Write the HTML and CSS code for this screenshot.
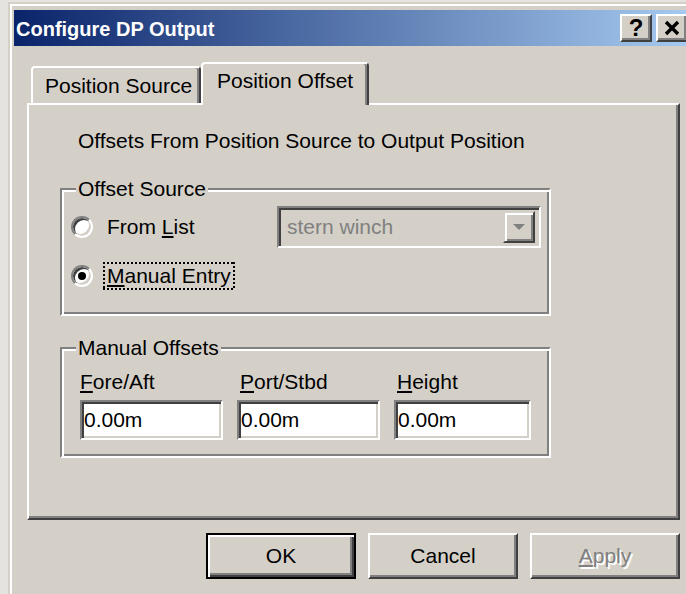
FILE: index.html
```html
<!DOCTYPE html>
<html lang="en">
<head>
<meta charset="utf-8">
<title>Configure DP Output</title>
<link rel="stylesheet" href="styles.css">
</head>
<body>
<div class="window">
  <div class="caption">
    <span class="title">Configure DP Output</span>
    <div class="caption-buttons">
      <span class="cbtn help">?</span>
      <span class="cbtn close">
        <svg width="16" height="16" viewBox="0 0 16 16"><path d="M2 2 L14 14 M14 2 L2 14" stroke="#000" stroke-width="3.4" fill="none"/></svg>
      </span>
    </div>
  </div>

  <div class="client">
    <div class="tabs">
      <div class="tab">Position Source</div>
      <div class="tab active">Position Offset</div>
    </div>

    <div class="panel">
      <p class="intro">Offsets From Position Source to Output Position</p>

      <fieldset class="group source">
        <legend>Offset Source</legend>
        <div class="row">
          <span class="radio"></span>
          <span class="label">From <u>L</u>ist</span>
          <div class="combo">
            <span class="combo-text">stern winch</span>
            <span class="combo-btn">
              <svg width="14" height="8" viewBox="0 0 14 8"><path d="M1 1 H13 L7 7 Z" fill="#808080"/></svg>
            </span>
          </div>
        </div>
        <div class="row">
          <span class="radio checked"></span>
          <span class="label focus"><u>M</u>anual Entry</span>
        </div>
      </fieldset>

      <fieldset class="group offsets">
        <legend>Manual Offsets</legend>
        <div class="fields">
          <div class="field">
            <span class="flabel"><u>F</u>ore/Aft</span>
            <span class="edit">0.00m</span>
          </div>
          <div class="field">
            <span class="flabel"><u>P</u>ort/Stbd</span>
            <span class="edit">0.00m</span>
          </div>
          <div class="field">
            <span class="flabel"><u>H</u>eight</span>
            <span class="edit">0.00m</span>
          </div>
        </div>
      </fieldset>
    </div>

    <div class="buttons">
      <span class="btn default">OK</span>
      <span class="btn">Cancel</span>
      <span class="btn disabled"><u>A</u>pply</span>
    </div>
  </div>
</div>
</body>
</html>
```

FILE: styles.css
```css
html, body {
  margin: 0;
  height: 100%;
  overflow: hidden;
  background: #e4e3e0;
}

body {
  font-family: "Liberation Sans", Arial, sans-serif;
  font-size: 21px;
  line-height: 24px;
  color: #000;
}

u {
  text-decoration-thickness: 2px;
  text-underline-offset: 2px;
}

/* Window frame */
.window {
  margin: 2px 0 0 8px;
  width: 676px;
  height: 600px;
  padding: 6px 4px 4px 4px;
  background: #d4d0c8;
  border: 2px solid #d4d0c8;
  box-shadow: inset 2px 2px 0 #fff;
}

/* Title bar */
.caption {
  height: 36px;
  display: flex;
  align-items: center;
  justify-content: space-between;
  padding: 0 2px;
  background: linear-gradient(90deg, #0a246a 0%, #a6caf0 100%);
}

.title {
  color: #fff;
  font-weight: bold;
  font-size: 20px;
  padding-top: 2px;
}

.caption-buttons {
  display: flex;
  gap: 4px;
}

.cbtn {
  width: 32px;
  height: 28px;
  box-sizing: border-box;
  display: flex;
  align-items: center;
  justify-content: center;
  background: #d4d0c8;
  border: 2px solid;
  border-color: #fff #404040 #404040 #fff;
  box-shadow: inset -2px -2px 0 #808080;
}

.cbtn.help {
  font-weight: bold;
  font-size: 24px;
  line-height: 24px;
}

/* Client area */
.client {
  padding: 16px 0 0 13px;
}

.tabs {
  display: flex;
  align-items: flex-end;
  height: 43px;
  margin: 0 0 -2px 4px;
  position: relative;
}

.tab {
  width: 170px;
  height: 37px;
  box-sizing: border-box;
  margin-bottom: 2px;
  padding: 6px 0 0 12px;
  border-top: 2px solid #fff;
  border-left: 2px solid #fff;
  border-right: 2px solid #404040;
  border-radius: 4px 4px 0 0;
  box-shadow: inset -2px 0 0 #808080;
  background: #d4d0c8;
}

.tab.active {
  width: 168px;
  height: 43px;
  margin-bottom: 0;
  padding: 5px 0 0 14px;
}

.panel {
  width: 653px;
  height: 417px;
  box-sizing: border-box;
  padding: 24px 0 0 31px;
  border: 2px solid;
  border-color: #fff #404040 #404040 #fff;
  box-shadow: inset -2px -2px 0 #808080;
}

.intro {
  margin: 0 0 0 18px;
}

/* Etched group boxes */
.group {
  width: 491px;
  box-sizing: border-box;
  margin: 24px 0 0 0;
  min-width: 0;
  border: 2px solid #808080;
  border-right-color: #fff;
  border-bottom-color: #fff;
  box-shadow: inset 2px 2px 0 #fff, inset -2px -2px 0 #808080;
}

.group legend {
  margin-left: 5px;
  padding: 0 2px;
  background: #d4d0c8;
}

.source {
  padding: 5px 8px 17px 9px;
}

.row {
  display: flex;
  align-items: center;
  height: 42px;
}

.row + .row {
  margin-top: 7px;
}

.radio {
  position: relative;
  width: 22px;
  height: 22px;
  box-sizing: border-box;
  border-radius: 50%;
  border: 2px solid;
  border-color: #808080 #fff #fff #808080;
  background: #fff;
  box-shadow: inset 2px 2px 0 #404040, inset -2px -2px 0 #d4d0c8;
  margin-right: 10px;
}

.radio.checked::after {
  content: "";
  position: absolute;
  left: 5px;
  top: 5px;
  width: 8px;
  height: 8px;
  border-radius: 50%;
  background: #000;
}

.label {
  padding: 2px 4px;
  line-height: 24px;
}

.label.focus {
  background:
    repeating-linear-gradient(90deg, #000 0 2px, transparent 2px 4px) top left / 100% 2px no-repeat,
    repeating-linear-gradient(90deg, #000 0 2px, transparent 2px 4px) bottom left / 100% 2px no-repeat,
    repeating-linear-gradient(180deg, #000 0 2px, transparent 2px 4px) top left / 2px 100% no-repeat,
    repeating-linear-gradient(180deg, #000 0 2px, transparent 2px 4px) top right / 2px 100% no-repeat;
}

.combo {
  margin-left: auto;
  width: 264px;
  height: 42px;
  box-sizing: border-box;
  display: flex;
  align-items: center;
  justify-content: space-between;
  border: 2px solid;
  border-color: #808080 #fff #fff #808080;
  box-shadow: inset 2px 2px 0 #404040, inset -2px -2px 0 #d4d0c8;
  padding: 0 4px 0 8px;
}

.combo-text {
  color: #808080;
}

.combo-btn {
  width: 32px;
  height: 32px;
  box-sizing: border-box;
  display: flex;
  align-items: center;
  justify-content: center;
  border: 2px solid;
  border-color: #d4d0c8 #404040 #404040 #d4d0c8;
  box-shadow: inset 2px 2px 0 #fff, inset -2px -2px 0 #808080;
}

.offsets {
  margin-top: 20px;
  padding: 10px 8px 16px 18px;
}

.offsets legend {
  margin-left: -4px;
}

.fields {
  display: flex;
  gap: 14px;
}

.field {
  display: flex;
  flex-direction: column;
  gap: 6px;
}

.field + .field .flabel {
  padding-left: 3px;
}

.edit {
  width: 143px;
  height: 40px;
  box-sizing: border-box;
  display: flex;
  align-items: center;
  padding-left: 2px;
  background: #fff;
  border: 2px solid;
  border-color: #808080 #fff #fff #808080;
  box-shadow: inset 2px 2px 0 #404040, inset -2px -2px 0 #d4d0c8;
}

.field:last-child .edit {
  width: 137px;
}

/* Dialog buttons */
.buttons {
  width: 653px;
  display: flex;
  justify-content: flex-end;
  gap: 12px;
  margin-top: 13px;
}

.btn {
  width: 150px;
  height: 46px;
  box-sizing: border-box;
  display: flex;
  align-items: center;
  justify-content: center;
  border: 2px solid;
  border-color: #fff #404040 #404040 #fff;
  box-shadow: inset -2px -2px 0 #808080;
}

.btn.default {
  border-color: #000;
  box-shadow: inset 2px 2px 0 #fff, inset -2px -2px 0 #404040, inset -4px -4px 0 #808080;
}

.btn.disabled {
  color: #808080;
  text-shadow: 2px 2px 0 #fff;
}
```
